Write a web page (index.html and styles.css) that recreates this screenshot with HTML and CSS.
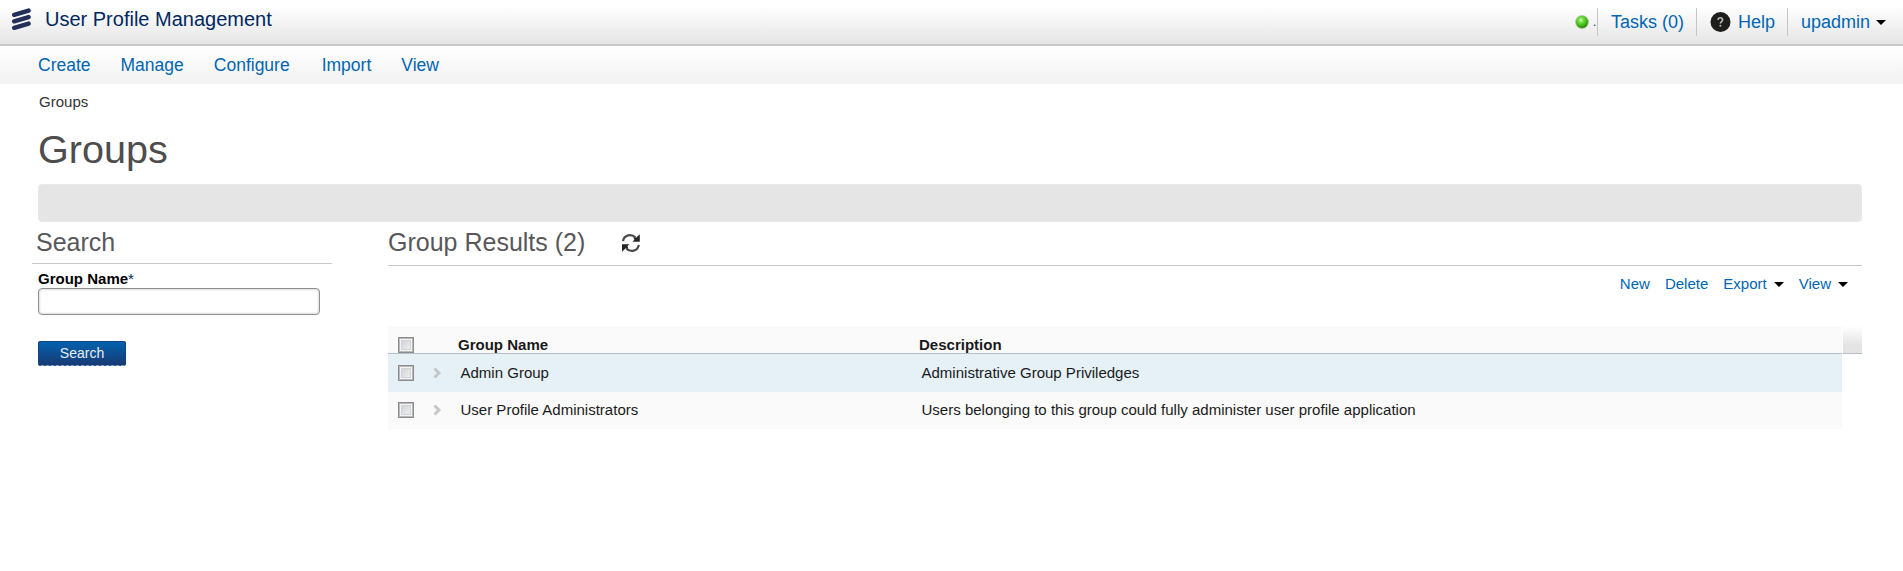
FILE: index.html
```
<!DOCTYPE html>
<html lang="en">
<head>
<meta charset="utf-8">
<title>User Profile Management</title>
<link rel="stylesheet" href="styles.css">
</head>
<body>
<header class="topbar">
  <div class="brand">
    <svg class="logo" width="20" height="24" viewBox="0 0 20 24"><path d="M3.2 7.8 17.6 3.6M3.2 14.3 17.6 10.1M3.2 20.8 17.6 16.6" stroke="#22305a" stroke-width="4.4" stroke-linecap="round"/></svg>
    <span class="product">User Profile Management</span>
  </div>
  <div class="session">
    <span class="status"><svg width="14" height="14" viewBox="0 0 14 14"><defs><radialGradient id="led" cx=".42" cy=".35" r=".65"><stop offset="0" stop-color="#d2ffb5"/><stop offset=".3" stop-color="#72e040"/><stop offset=".75" stop-color="#35ad0b"/><stop offset="1" stop-color="#217500"/></radialGradient></defs><circle cx="7" cy="7" r="6.4" fill="url(#led)" stroke="#a9c49d" stroke-width=".7"/></svg><span class="dot">.</span></span>
    <a class="tasks">Tasks (0)</a>
    <a class="help"><svg width="21" height="22" viewBox="0 0 22 22"><circle cx="11" cy="11" r="10.5" fill="#1d1d1b"/><path d="M8.4 8.8C8.5 5.8 13.4 5.9 13.2 8.8 13.1 10.5 10.9 10.6 10.9 12.6" fill="none" stroke="#b8b8b8" stroke-width="1.7"/><circle cx="10.9" cy="15" r="1.1" fill="#b8b8b8"/></svg>Help</a>
    <a class="user">upadmin<i class="caret"></i></a>
  </div>
</header>
<nav class="menu">
  <a>Create</a><a>Manage</a><a>Configure</a><a>Import</a><a>View</a>
</nav>
<main class="page">
  <div class="crumb">Groups</div>
  <h1 class="title">Groups</h1>
  <div class="strip"></div>
  <div class="columns">
    <section class="search">
      <h2 class="heading search-heading">Search</h2>
      <div class="form">
        <label class="label" for="name">Group Name<span class="star">*</span></label>
        <input class="field" id="name" type="text">
        <button class="submit">Search</button>
      </div>
    </section>
    <section class="results">
      <h2 class="heading results-heading">Group Results (2)
        <svg width="20" height="20" viewBox="0 0 20 20"><path d="M2 8.2C3 1.6 10.5.4 14.5 4.6M17.8 11.8C16.8 18.4 9.3 19.6 5.3 15.4" fill="none" stroke="#4a4a4a" stroke-width="2.2"/><path d="M18.8 1.2v7.6h-7.4l2-2-1-2 3-.4zM1 18.8v-7.6h7.4l-2 2 1 2-3 .4z" fill="#262626"/></svg>
      </h2>
      <div class="actions"><a>New</a><a>Delete</a><a>Export<i class="caret"></i></a><a>View<i class="caret"></i></a></div>
      <div class="grid">
        <div class="rows">
          <div class="row head"><i class="check"></i><span></span><span>Group Name</span><span>Description</span></div>
          <div class="row selected"><i class="check"></i><svg class="chev" width="8" height="12" viewBox="0 0 8 12"><path d="M1.5 1.5 6 6 1.5 10.5" fill="none" stroke="#c6c6c6" stroke-width="3"/></svg><span>Admin Group</span><span>Administrative Group Priviledges</span></div>
          <div class="row last"><i class="check"></i><svg class="chev" width="8" height="12" viewBox="0 0 8 12"><path d="M1.5 1.5 6 6 1.5 10.5" fill="none" stroke="#c6c6c6" stroke-width="3"/></svg><span>User Profile Administrators</span><span>Users belonging to this group could fully administer user profile application</span></div>
        </div>
        <div class="gutter"></div>
      </div>
    </section>
  </div>
</main>
</body>
</html>
```
FILE: styles.css
```
* { box-sizing: border-box; }
body { margin: 0; background: #fff; color: #1a1a1a; font: 15.02px/18px "Liberation Sans", Arial, sans-serif; white-space: nowrap; overflow: hidden; }
a { color: #0066b3; text-decoration: none; }
h1, h2 { margin: 0; font-weight: 400; }

.topbar { display: flex; justify-content: space-between; height: 46px; background: linear-gradient(#fff 6px, #e5e5e5 44px); border-bottom: 2px solid #c8c8c8; }
.brand { display: flex; padding: 7px 0 0 11px; }
.product { margin: 1px 0 0 14px; font-size: 20px; line-height: 23px; color: #00285f; }
.session { display: flex; height: 28px; margin: 8px 17px 0 0; font-size: 18px; line-height: 28px; }
.session a { display: flex; align-items: center; border-left: 1px solid #c5c5c5; }
.status { display: flex; align-items: center; width: 22px; }
.status .dot { margin-left: 4px; font-size: 12px; color: #00285f; }
.session .tasks { width: 99px; padding-left: 13px; }
.session .help { width: 91px; padding-left: 13px; gap: 7px; }
.session .user { padding-left: 13px; }
.caret { display: inline-block; width: 0; height: 0; border: 5px solid transparent; border-top-color: #000; border-bottom: 0; margin-left: 8px; }
.session .caret { margin-left: 6px; }

.menu { display: flex; gap: 30px; height: 38px; padding-left: 38px; background: linear-gradient(#fff, #f2f2f2); font-size: 17.5px; line-height: 38px; }
.menu a:nth-child(4) { margin-left: 2px; }

.page { padding: 0 41px 0 38px; }
.crumb { height: 35px; padding: 9px 0 0 1px; color: #333; }
.title { height: 65px; padding-top: 8px; font-size: 39.6px; line-height: 45px; color: #4d4d4d; }
.strip { height: 38px; background: #e5e5e5; border: 1px solid #e9e9e9; border-radius: 4px; }
.columns { display: flex; }
.search { width: 300px; margin-left: -6px; }
.results { flex: 1; margin-left: 56px; }
.heading { font-size: 25px; line-height: 28px; color: #58585a; border-bottom: 1px solid #c8c8c8; }
.search-heading { height: 42px; padding: 6px 0 0 4px; }
.results-heading { display: flex; align-items: flex-start; gap: 35px; height: 44px; padding-top: 6px; }
.results-heading svg { margin: 5px 0 0 1px; }
.form { display: flex; flex-direction: column; align-items: flex-start; padding: 6px 0 0 6px; }
.label { font-weight: 700; color: #000; }
.star { font-weight: 400; color: #00285f; }
.field { width: 282px; height: 27px; border: 1px solid #8f8f8f; border-radius: 4px; box-shadow: inset 0 0 2px 1px #ddd; }
.submit { width: 88px; height: 25px; margin-top: 26px; padding: 0 0 1px; border: 1px solid #12427f; border-bottom: 1px dashed #9a9ab8; border-radius: 2px; background: linear-gradient(#0262ad, #183a74); color: #e8edf5; font: 14px/22px "Liberation Sans", Arial, sans-serif; }

.actions { display: flex; justify-content: flex-end; gap: 15px; height: 60px; padding: 9px 14px 0 0; }
.actions .caret { margin: 0 0 2px 7px; }
.grid { display: flex; gap: 1px; }
.rows { width: 1454px; }
.row { display: grid; grid-template-columns: 36px 36.5px 461px 1fr; align-items: center; height: 37px; background: #fafafa; }
.row.head { grid-template-columns: 36px 34px 461px 1fr; height: 28px; padding-top: 10px; font-weight: 700; border-bottom: 1px solid #b5bfcc; }
.row.selected { height: 38px; background: #e5f0f7; }
.row.last { padding-bottom: 1px; }
.check { width: 16px; height: 16px; margin-left: 10px; border: 1px solid #8c8c8c; box-shadow: inset 0 0 0 1px #b8b8b8, inset 0 0 0 2px #f4f4f4, inset 0 0 0 3px #d0d3d8; background: linear-gradient(135deg, #c6cad2, #f8f8f8); }
.chev { margin-left: 9px; }
.gutter { width: 19px; height: 28px; background: linear-gradient(#fff, #e4e4e4 70%); border-bottom: 1px solid #b5bfcc; }
```
